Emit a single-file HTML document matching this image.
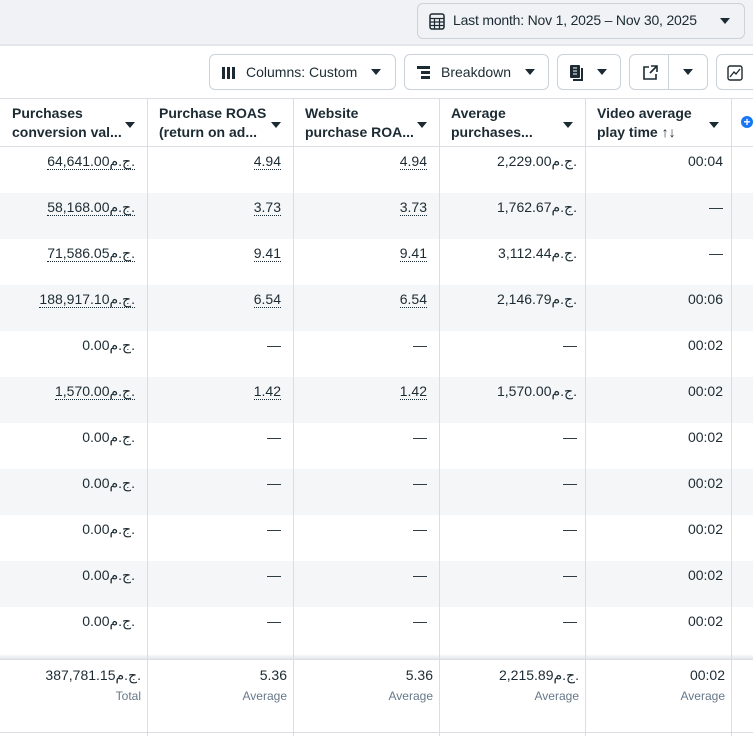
<!DOCTYPE html>
<html><head><meta charset="utf-8"><style>
*{box-sizing:border-box;margin:0;padding:0}
body{width:753px;height:736px;overflow:hidden;background:#fff;font-family:"Liberation Sans","Noto Sans CJK SC",sans-serif;color:#1c2b33;position:relative}
.top{position:absolute;left:0;top:0;width:753px;height:45px;background:#f0f2f5;border-bottom:1px solid #e4e6eb}
.btn{position:absolute;border:1px solid #cbd2d9;border-radius:6px;background:#fff;height:36px;font-size:14px;color:#1c2b33;display:flex;align-items:center}
.tri{width:0;height:0;border-left:5px solid transparent;border-right:5px solid transparent;border-top:6px solid #1c2b33;display:inline-block}
.vl{position:absolute;top:98px;width:1px;height:638px;background:#dadde1}
.hd{position:absolute;top:98px;height:49px;font-size:14px;font-weight:bold;line-height:19px;color:#1c2b33;padding:6px 0 0 12px}
.hd .tri{position:absolute;right:12px;top:24px}
.row{position:absolute;left:0;width:753px;height:46px}
.u{border-bottom:1px dotted #1c2b33;line-height:15px}
</style></head><body>
<div class="top"></div>
<div class="btn" style="left:417px;top:3px;width:328px;background:#f0f2f5;border-color:#cbd2d9">
<svg style="position:absolute;left:11px;top:9px" width="16" height="17" viewBox="0 0 16 17"><rect x="1" y="1" width="14" height="15" rx="2" fill="none" stroke="#1c2b33" stroke-width="1.5"/><path d="M1 5.5H15M1 9H15M1 12.5H15M5.5 5.5V16M10.5 5.5V16" stroke="#1c2b33" stroke-width="1.2"/></svg>
<span style="position:absolute;left:35px;top:8px;letter-spacing:-0.2px">Last month: Nov 1, 2025 – Nov 30, 2025</span>
<span class="tri" style="position:absolute;left:302px;top:14px"></span></div>
<div style="position:absolute;left:0;top:45px;width:753px;height:1px;background:#e4e6eb"></div>

<div class="btn" style="left:209px;top:54px;width:187px">
<svg style="position:absolute;left:12px;top:12px" width="14" height="12"><rect x="0" y="0" width="3" height="12" fill="#1c2b33"/><rect x="5" y="0" width="3" height="12" fill="#1c2b33"/><rect x="10" y="0" width="3" height="12" fill="#1c2b33"/></svg>
<span style="position:absolute;left:36px;top:9px">Columns: Custom</span><span class="tri" style="position:absolute;left:161px;top:14px"></span></div>
<div class="btn" style="left:404px;top:54px;width:145px">
<svg style="position:absolute;left:12px;top:11px" width="14" height="14"><rect x="0" y="0" width="13" height="3" fill="#1c2b33"/><rect x="4" y="5" width="9" height="3" fill="#1c2b33"/><rect x="4" y="10" width="9" height="3" fill="#1c2b33"/></svg>
<span style="position:absolute;left:36px;top:9px">Breakdown</span><span class="tri" style="position:absolute;left:120px;top:14px"></span></div>
<div class="btn" style="left:557px;top:54px;width:64px">
<svg style="position:absolute;left:12px;top:10px" width="16" height="16"><rect x="0" y="0" width="10" height="13" rx="1" fill="#1c2b33"/><path d="M12 3V15H3" stroke="#1c2b33" stroke-width="2" fill="none"/><path d="M3 3H7M3 6H7M3 9H7" stroke="#fff" stroke-width="1"/></svg>
<span class="tri" style="position:absolute;left:39px;top:14px"></span></div>
<div class="btn" style="left:629px;top:54px;width:79px">
<svg style="position:absolute;left:12px;top:10px" width="16" height="16"><path d="M7 2H2V14H14V9" stroke="#1c2b33" stroke-width="1.6" fill="none"/><path d="M9 1H15V7M15 1L8 8" stroke="#1c2b33" stroke-width="1.6" fill="none"/></svg>
<div style="position:absolute;left:38px;top:0;width:1px;height:34px;background:#cbd2d9"></div>
<span class="tri" style="position:absolute;left:53px;top:14px"></span></div>
<div class="btn" style="left:716px;top:54px;width:60px">
<svg style="position:absolute;left:10px;top:10px" width="16" height="16"><rect x="1" y="1" width="14" height="14" rx="2" fill="none" stroke="#1c2b33" stroke-width="1.4"/><path d="M3 12L7 7L9 9L13 4" stroke="#1c2b33" stroke-width="1.3" fill="none"/></svg></div>

<div style="position:absolute;left:0;top:98px;width:753px;height:1px;background:#dadde1"></div>
<div style="position:absolute;left:0;top:146px;width:753px;height:1px;background:#dadde1"></div>

<div class="row" style="top:193px;background:#f5f6f7"></div>
<div class="row" style="top:285px;background:#f5f6f7"></div>
<div class="row" style="top:377px;background:#f5f6f7"></div>
<div class="row" style="top:469px;background:#f5f6f7"></div>
<div class="row" style="top:561px;background:#f5f6f7"></div>
<div style="position:absolute;left:0;top:654px;width:753px;height:5px;background:linear-gradient(#fff,#e4e6eb)"></div>
<div style="position:absolute;left:0;top:659px;width:753px;height:1px;background:#dadde1"></div>
<div style="position:absolute;left:0;top:732px;width:753px;height:1px;background:#dadde1"></div>

<div class="vl" style="left:147px"></div><div class="vl" style="left:293px"></div><div class="vl" style="left:439px"></div><div class="vl" style="left:585px"></div><div class="vl" style="left:731px"></div>

<div class="hd" style="left:0;width:147px">Purchases<br>conversion val...<span class="tri"></span></div>
<div class="hd" style="left:147px;width:146px">Purchase ROAS<br>(return on ad...<span class="tri"></span></div>
<div class="hd" style="left:293px;width:146px">Website<br>purchase ROA...<span class="tri"></span></div>
<div class="hd" style="left:439px;width:146px">Average<br>purchases...<span class="tri"></span></div>
<div class="hd" style="left:585px;width:146px">Video average<br>play time ↑↓<span class="tri"></span></div>
<div style="position:absolute;left:741px;top:116px;width:12px;height:12px;border-radius:6px;background:#1877f2;color:#fff;font-size:12px;line-height:12px;text-align:center;font-weight:bold">+</div>

<div style="position:absolute;left:0;top:144px;width:753px;font-size:14px">
<div style="position:absolute;top:7px;right:618px;text-align:right;line-height:21px">
<div style="height:46px"><span class="u">64,641.00ج.م.</span></div>
<div style="height:46px"><span class="u">58,168.00ج.م.</span></div>
<div style="height:46px"><span class="u">71,586.05ج.م.</span></div>
<div style="height:46px"><span class="u">188,917.10ج.م.</span></div>
<div style="height:46px">0.00ج.م.</div>
<div style="height:46px"><span class="u">1,570.00ج.م.</span></div>
<div style="height:46px">0.00ج.م.</div><div style="height:46px">0.00ج.م.</div><div style="height:46px">0.00ج.م.</div><div style="height:46px">0.00ج.م.</div><div style="height:46px">0.00ج.م.</div>
</div>
<div style="position:absolute;top:7px;right:472px;text-align:right;line-height:21px">
<div style="height:46px"><span class="u">4.94</span></div><div style="height:46px"><span class="u">3.73</span></div><div style="height:46px"><span class="u">9.41</span></div><div style="height:46px"><span class="u">6.54</span></div><div style="height:46px">—</div><div style="height:46px"><span class="u">1.42</span></div><div style="height:46px">—</div><div style="height:46px">—</div><div style="height:46px">—</div><div style="height:46px">—</div><div style="height:46px">—</div>
</div>
<div style="position:absolute;top:7px;right:326px;text-align:right;line-height:21px">
<div style="height:46px"><span class="u">4.94</span></div><div style="height:46px"><span class="u">3.73</span></div><div style="height:46px"><span class="u">9.41</span></div><div style="height:46px"><span class="u">6.54</span></div><div style="height:46px">—</div><div style="height:46px"><span class="u">1.42</span></div><div style="height:46px">—</div><div style="height:46px">—</div><div style="height:46px">—</div><div style="height:46px">—</div><div style="height:46px">—</div>
</div>
<div style="position:absolute;top:7px;right:176px;text-align:right;line-height:21px">
<div style="height:46px">2,229.00ج.م.</div><div style="height:46px">1,762.67ج.م.</div><div style="height:46px">3,112.44ج.م.</div><div style="height:46px">2,146.79ج.م.</div><div style="height:46px">—</div><div style="height:46px">1,570.00ج.م.</div><div style="height:46px">—</div><div style="height:46px">—</div><div style="height:46px">—</div><div style="height:46px">—</div><div style="height:46px">—</div>
</div>
<div style="position:absolute;top:7px;right:30px;text-align:right;line-height:21px">
<div style="height:46px">00:04</div><div style="height:46px">—</div><div style="height:46px">—</div><div style="height:46px">00:06</div><div style="height:46px">00:02</div><div style="height:46px">00:02</div><div style="height:46px">00:02</div><div style="height:46px">00:02</div><div style="height:46px">00:02</div><div style="height:46px">00:02</div><div style="height:46px">00:02</div>
</div>
</div>

<div style="position:absolute;top:665px;left:0;width:753px;font-size:14px;line-height:20px;text-align:right">
<div style="position:absolute;right:612px">387,781.15ج.م.<br><span style="font-size:12px;color:#67788a">Total</span></div>
<div style="position:absolute;right:466px">5.36<br><span style="font-size:12px;color:#67788a">Average</span></div>
<div style="position:absolute;right:320px">5.36<br><span style="font-size:12px;color:#67788a">Average</span></div>
<div style="position:absolute;right:174px">2,215.89ج.م.<br><span style="font-size:12px;color:#67788a">Average</span></div>
<div style="position:absolute;right:28px">00:02<br><span style="font-size:12px;color:#67788a">Average</span></div>
</div>
</body></html>
